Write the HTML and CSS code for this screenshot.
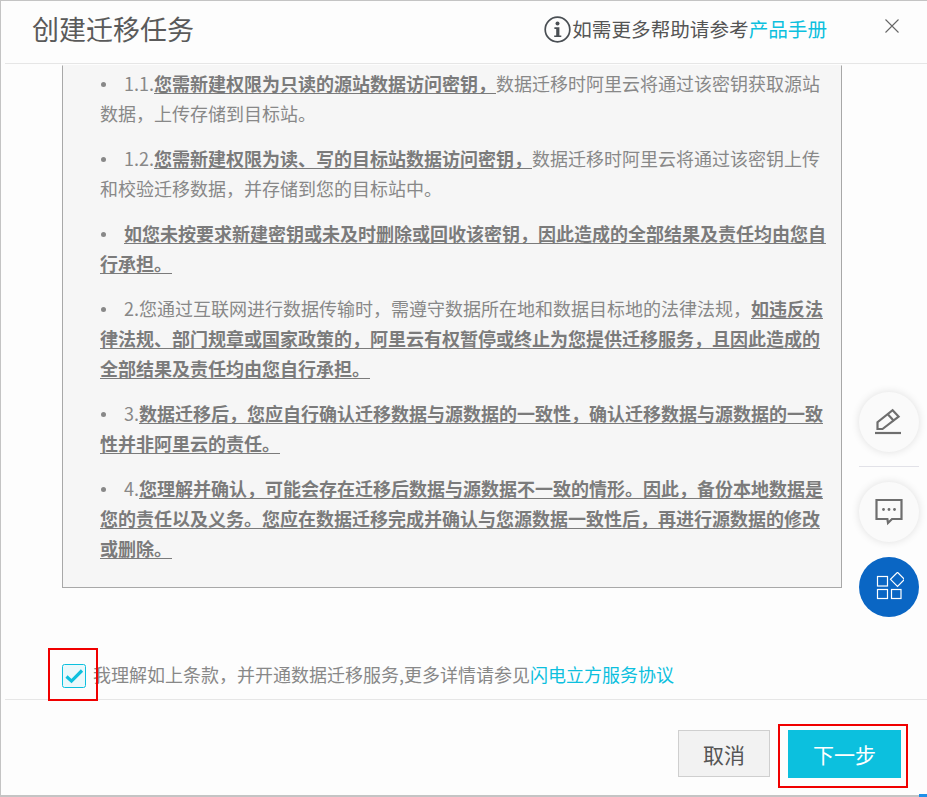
FILE: index.html
```html
<!DOCTYPE html>
<html lang="zh-CN">
<head>
<meta charset="utf-8">
<title>创建迁移任务</title>
<link rel="stylesheet" href="styles.css">
</head>
<body>
<div class="dialog">
  <header class="head">
    <h1 class="title">创建迁移任务</h1>
    <div class="help">
      <svg class="info" width="27" height="27" viewBox="0 0 27 27"><circle cx="13.5" cy="13.5" r="12.3" fill="none" stroke="#4a4f54" stroke-width="1.7"/><circle cx="13.5" cy="7.4" r="2" fill="#4a4f54"/><path d="M10.4 11.2h5v8.2h1.900v1.700H10.2v-1.700h2v-6.500h-1.800z" fill="#4a4f54"/></svg>
      <span>如需更多帮助请参考<a class="link">产品手册</a></span>
    </div>
    <svg class="close" width="16" height="16" viewBox="0 0 16 16"><path d="M1.5 1.5l13 13M14.5 1.5l-13 13" stroke="#666" stroke-width="1.1" fill="none"/></svg>
  </header>
  <main class="main">
    <div class="terms">
      <ul class="list">
        <li>1.1.<b>您需新建权限为只读的源站数据访问密钥，</b>数据迁移时阿里云将通过该密钥获取源站<br>数据，上传存储到目标站。</li>
        <li>1.2.<b>您需新建权限为读、写的目标站数据访问密钥，</b>数据迁移时阿里云将通过该密钥上传<br>和校验迁移数据，并存储到您的目标站中。</li>
        <li class="strong"><b>如您未按要求新建密钥或未及时删除或回收该密钥，因此造成的全部结果及责任均由您自<br>行承担。</b></li>
        <li>2.您通过互联网进行数据传输时，需遵守数据所在地和数据目标地的法律法规，<b>如违反法<br>律法规、部门规章或国家政策的，阿里云有权暂停或终止为您提供迁移服务，且因此造成的<br>全部结果及责任均由您自行承担。</b></li>
        <li>3.<b>数据迁移后，您应自行确认迁移数据与源数据的一致性，确认迁移数据与源数据的一致<br>性并非阿里云的责任。</b></li>
        <li>4.<b>您理解并确认，可能会存在迁移后数据与源数据不一致的情形。因此，备份本地数据是<br>您的责任以及义务。您应在数据迁移完成并确认与您源数据一致性后，再进行源数据的修改<br>或删除。</b></li>
      </ul>
    </div>
    <div class="agree">
      <span class="check">
        <svg width="24" height="24" viewBox="0 0 24 24"><rect x="0.5" y="0.5" width="23" height="23" rx="2" fill="#eaf8fb" stroke="#0cc0de"/><path d="M4.500 12.500l5 4.600L20 6.500" fill="none" stroke="#0cc0de" stroke-width="3.2"/></svg>
        <i class="mark mark-check"></i>
      </span>
      <span class="agree-text">我理解如上条款，并开通数据迁移服务,更多详情请参见<a class="link">闪电立方服务协议</a></span>
    </div>
  </main>
  <footer class="foot">
    <button class="btn btn-cancel">取消</button>
    <span class="next-wrap">
      <button class="btn btn-next">下一步</button>
      <i class="mark mark-next"></i>
    </span>
  </footer>
  <aside class="tools">
    <button class="fab">
      <svg width="30" height="30" viewBox="0 0 30 30"><path d="M1 26h26" stroke="#6e6e6e" stroke-width="2.2" fill="none"/><path d="M3.500 22v-6.800L18.600 3.200l6 6.400L8.500 22z" fill="none" stroke="#6e6e6e" stroke-width="2.2"/><path d="M14 7.500l6 6.400" stroke="#6e6e6e" stroke-width="2.2" fill="none"/></svg>
    </button>
    <hr class="rule">
    <button class="fab">
      <svg width="28" height="28" viewBox="0 0 28 28"><path d="M1.500 2h25v19H17l-4 4-.6-4H1.500z" fill="none" stroke="#6e6e6e" stroke-width="2.2"/><circle cx="8.500" cy="11.500" r="1.400" fill="#6e6e6e"/><circle cx="14" cy="11.500" r="1.400" fill="#6e6e6e"/><circle cx="19.500" cy="11.500" r="1.400" fill="#6e6e6e"/></svg>
    </button>
    <button class="fab fab-blue">
      <svg width="30" height="30" viewBox="0 0 30 30"><g fill="none" stroke="#fff" stroke-width="1.2"><rect x="3.500" y="4.500" width="10" height="9.500"/><path d="M23.500 0.300l7 7-7 7-7-7z"/><rect x="3.500" y="17.500" width="10" height="9"/><rect x="17.500" y="17.500" width="9.500" height="9"/></g></svg>
    </button>
  </aside>
  <span class="corner"></span>
</div>
</body>
</html>
```
FILE: styles.css
```css
* { box-sizing: border-box; }
html, body { margin: 0; padding: 0; }
body {
  width: 927px;
  height: 797px;
  overflow: hidden;
  background: #fff;
  font-family: "Noto Sans CJK SC", "Liberation Sans", sans-serif;
  color: #888;
}
.dialog {
  position: relative;
  width: 927px;
  height: 797px;
  display: flex;
  flex-direction: column;
  background: #fdfdfd;
  border: 1px solid #c4c4c4;
  border-right: 0;
  border-bottom-width: 2px;
}
.head {
  flex: none;
  height: 63px;
  margin: 0 0 0 4px;
  display: flex;
  align-items: center;
  padding: 0 27px 6px 27px;
  border-bottom: 1px solid #e6e6e6;
}
.title {
  margin: 0;
  font-size: 27px;
  line-height: 40px;
  font-weight: 400;
  color: #5a5a5a;
}
.help {
  margin-left: auto;
  display: flex;
  align-items: center;
  gap: 1px;
  font-size: 19.6px;
  color: #555;
  line-height: 28px;
}
.info { flex: none; }
.link { color: #0cc0de; text-decoration: none; }
.close { flex: none; margin: 0 0 6px 57px; }
.main {
  flex: none;
  height: 635px;
  padding: 1px 85px 0 61px;
  display: flex;
  flex-direction: column;
}
.terms {
  height: 523px;
  background: #f6f6f6;
  border: 1px solid #a8a8a8;
  border-top-color: transparent;
  padding: 2px 0 0 37px;
}
.list {
  margin: 0;
  padding: 0;
  list-style: none;
  display: flex;
  flex-direction: column;
  gap: 15px;
  font-size: 18px;
  line-height: 30px;
  white-space: nowrap;
  font-weight: 400;
}
.list li::before {
  content: "";
  display: inline-block;
  width: 5px;
  height: 5px;
  border-radius: 50%;
  background: #888;
  margin: 0 18px 3px 1px;
  vertical-align: middle;
}
.list b {
  font-weight: 700;
  color: #7b7b7b;
  text-decoration: underline;
  text-underline-offset: 2px;
}
.agree {
  margin-top: 76px;
  display: flex;
  align-items: flex-start;
  gap: 7px;
  font-size: 18px;
  line-height: 20px;
  font-weight: 400;
}
.check { position: relative; display: block; height: 24px; flex: none; }
.check svg { display: block; }
.mark { position: absolute; display: block; border: 2px solid #f00000; }
.mark-check { left: -14px; top: -16px; width: 50px; height: 53px; }
.foot {
  flex: none;
  margin-left: 4px;
  flex-grow: 1;
  border-top: 1px solid #e6e6e6;
  display: flex;
  justify-content: flex-end;
  align-items: flex-start;
  padding: 30px 26px 0 0;
  gap: 18px;
}
.btn {
  height: 47px;
  border: 0;
  margin: 0;
  padding: 0;
  font-family: inherit;
  font-size: 21px;
  font-weight: 400;
}
.btn-cancel {
  width: 92px;
  background: #f2f2f2;
  border: 1px solid #cfcfcf;
  color: #555;
}
.next-wrap { position: relative; display: block; height: 48px; }
.btn-next {
  display: block;
  width: 113px;
  height: 48px;
  background: #0cc0de;
  color: #fff;
}
.mark-next { left: -10px; top: -6px; width: 130px; height: 64px; }
.tools {
  position: absolute;
  left: 858px;
  top: 391px;
  width: 60px;
  display: flex;
  flex-direction: column;
  align-items: center;
}
.fab {
  width: 60px;
  height: 60px;
  padding: 0;
  border: 0;
  border-radius: 50%;
  background: #fafafa;
  box-shadow: 0 0 8px rgba(0, 0, 0, 0.12);
  display: flex;
  align-items: center;
  justify-content: center;
}
.fab-blue { background: #0a66c4; margin-top: 15px; box-shadow: none; }
.rule {
  width: 60px;
  height: 1px;
  margin: 14px 0 15px;
  border: 0;
  background: #e2e2e8;
}
.corner {
  position: absolute;
  right: 0;
  bottom: -2px;
  width: 8px;
  height: 3px;
  background: #1e90e8;
}
```
